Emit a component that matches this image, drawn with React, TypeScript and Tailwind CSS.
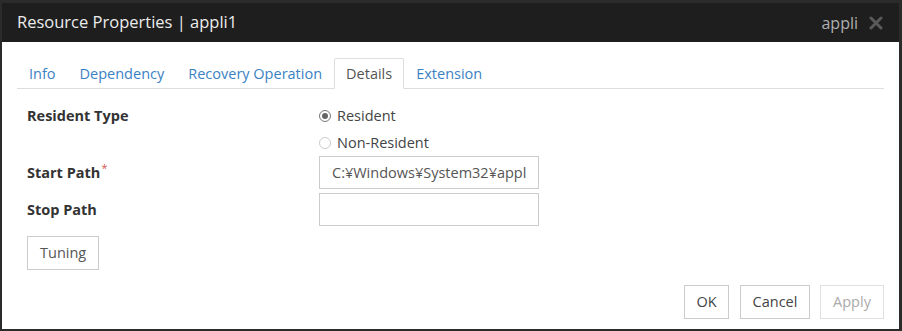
import React, { useState } from 'react';

const font = { fontFamily: '"Open Sans", "Noto Sans", sans-serif' };

const App: React.FC = () => {
  const [resident, setResident] = useState(true);
  const tabs = ['Info', 'Dependency', 'Recovery Operation', 'Details', 'Extension'];

  return (
    <div className="w-[902px] h-[331px] bg-[#2b2b2b] pt-[3px] pl-[2px] pr-[3px] pb-[2px]" style={font}>
      <div className="flex flex-col h-full bg-white">
        {/* Header */}
        <div className="h-[39px] bg-[#1e1e1e] flex items-center justify-between pl-[15px] pr-[16px]">
          <span className="text-[16.5px] text-[#ececec]">Resource Properties | appli1</span>
          <div className="flex items-center gap-[11px]">
            <span className="text-[16px] text-[#b0b0b0]">appli</span>
            <svg width="14" height="14" viewBox="0 0 14 14">
              <path d="M2 2 L12 12 M12 2 L2 12" stroke="#5a5a5a" strokeWidth="3" strokeLinecap="round" />
            </svg>
          </div>
        </div>

        {/* Tabs */}
        <div className="px-[15px] pt-[16px]">
          <div className="flex border-b border-[#dddddd] h-[31px]">
            {tabs.map((t) => (
              <div
                key={t}
                className={`px-[11px] text-[14.5px] leading-[29px] -mb-px ${
                  t === 'Details'
                    ? 'border border-[#dddddd] border-b-white bg-white text-[#555] rounded-t-[2px]'
                    : 'text-[#3a82c4] border border-transparent'
                }`}
              >
                {t}
              </div>
            ))}
          </div>
        </div>

        {/* Body */}
        <div className="flex flex-col px-[25px] pt-[17px]">
          <div className="flex">
            <div className="w-[292px] text-[14.5px] font-bold text-[#333] leading-[20px]">Resident Type</div>
            <div className="flex flex-col gap-[7px]">
              <label className="flex items-center gap-[6px] text-[14.5px] text-[#444] leading-[20px]" onClick={() => setResident(true)}>
                <span className={`w-[12px] h-[12px] rounded-full border flex items-center justify-center ${resident ? 'border-[#777]' : 'border-[#ccc]'}`}>
                  {resident && <span className="w-[6px] h-[6px] rounded-full bg-[#666]" />}
                </span>
                Resident
              </label>
              <label className="flex items-center gap-[6px] text-[14.5px] text-[#444] leading-[20px]" onClick={() => setResident(false)}>
                <span className={`w-[12px] h-[12px] rounded-full border flex items-center justify-center ${!resident ? 'border-[#777]' : 'border-[#ccc]'}`}>
                  {!resident && <span className="w-[6px] h-[6px] rounded-full bg-[#666]" />}
                </span>
                Non-Resident
              </label>
            </div>
          </div>

          <div className="flex items-center mt-[3px]">
            <div className="w-[292px] text-[14.5px] font-bold text-[#333]">
              Start Path<sup className="text-[#d9534f] font-normal ml-[1px]">*</sup>
            </div>
            <input
              readOnly
              value="C:¥Windows¥System32¥appli.exe"
              className="w-[220px] h-[33px] border border-[#ccc] px-[12px] text-[14.5px] text-[#555] outline-none"
            />
          </div>

          <div className="flex items-center mt-[4px]">
            <div className="w-[292px] text-[14.5px] font-bold text-[#333]">Stop Path</div>
            <input readOnly value="" className="w-[220px] h-[33px] border border-[#ccc] outline-none" />
          </div>

          <div className="mt-[10px]">
            <button className="h-[34px] px-[12px] border border-[#ccc] text-[14.5px] text-[#555]">Tuning</button>
          </div>
        </div>

        <div className="flex justify-end mt-[15px] pr-[15px]">
          <button className="h-[34px] w-[45px] border border-[#ccc] text-[14.5px] text-[#444]">OK</button>
          <button className="h-[34px] w-[70px] ml-[11px] border border-[#ccc] text-[14.5px] text-[#444]">Cancel</button>
          <button className="h-[34px] w-[64px] ml-[10px] border border-[#e0e0e0] text-[14.5px] text-[#aaa]">Apply</button>
        </div>
      </div>
    </div>
  );
};

export default App;
